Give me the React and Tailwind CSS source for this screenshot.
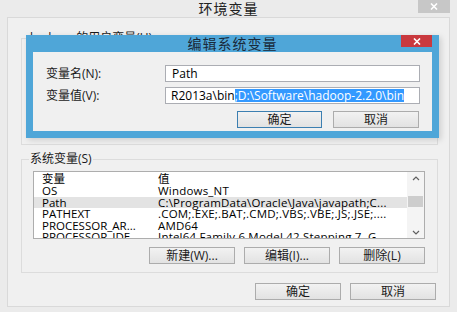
import React from 'react';

const font = "font-['Open_Sans','Noto_Sans_CJK_SC',sans-serif]";

const rows = [
  ['OS', 'Windows_NT'],
  ['Path', 'C:\\ProgramData\\Oracle\\Java\\javapath;C...'],
  ['PATHEXT', '.COM;.EXE;.BAT;.CMD;.VBS;.VBE;.JS;.JSE;....'],
  ['PROCESSOR_AR...', 'AMD64'],
  ['PROCESSOR_IDE...', 'Intel64 Family 6 Model 42 Stepping 7, G...'],
];

// Botón estilo Windows 8
function WinButton({ children, className = '', primary = false }) {
  return (
    <button
      type="button"
      className={`h-[17px] flex items-center justify-center text-[12px] leading-none text-[#1a1a1a] bg-gradient-to-b from-[#f2f2f2] to-[#e2e2e2] border ${
        primary ? 'border-[#3c7fb1]' : 'border-[#acacac]'
      } ${className}`}
    >
      {children}
    </button>
  );
}

function Chevron({ down }) {
  return (
    <svg width="8" height="5" viewBox="0 0 8 5" className="block">
      <polyline
        points={down ? '1,1 4,4 7,1' : '1,4 4,1 7,4'}
        fill="none"
        stroke="#606060"
        strokeWidth="1.2"
      />
    </svg>
  );
}

export default function App() {
  return (
    <div className={`relative w-[457px] h-[312px] overflow-hidden bg-[#ebebeb] flex flex-col ${font}`}>
      {/* Barra de título de la ventana principal */}
      <div className="h-[17px] grid grid-cols-[1fr_auto_1fr] items-start shrink-0">
        <div />
        <div className="text-[14px] leading-[17px] tracking-[1px] text-[#222]">环境变量</div>
        <div className="flex justify-end pr-[7px]">
          <div className="w-[32px] h-[13px] bg-[#c7c7c7] flex items-center justify-center">
            <svg width="8" height="7" viewBox="0 0 8 7">
              <path d="M1 0.5 L7 6.5 M7 0.5 L1 6.5" stroke="#fff" strokeWidth="1.6" />
            </svg>
          </div>
        </div>
      </div>

      {/* Área de cliente */}
      <div className="flex-1 mx-[7px] mb-[5px] border border-[#d9d9d9] bg-[#f0f0f0] flex flex-col pl-[13px] pr-[11px]">
        {/* Grupo de variables de usuario (tapado por el diálogo) */}
        <fieldset className="mt-[13px] h-[114px] border border-[#dcdcdc]">
          <legend className="ml-[7px] px-[1px] text-[12px] leading-[14px] text-[#1a1a1a]">hadoop 的用户变量(U)</legend>
        </fieldset>

        {/* Grupo de variables del sistema */}
        <fieldset className="mt-[7px] h-[121px] border border-[#dcdcdc]">
          <legend className="ml-[7px] px-[1px] text-[12px] leading-[14px] text-[#1a1a1a]">系统变量(S)</legend>
          <div className="pl-[11px] pr-[12px] pt-[5px] flex flex-col">
            <div className="h-[68px] border border-[#adadad] bg-white flex overflow-hidden">
              <div className="flex-1 flex flex-col text-[11.5px] text-black">
                <div className="h-[13px] shrink-0 flex items-center leading-[13px]">
                  <span className="w-[124px] pl-[8px] shrink-0">变量</span>
                  <span>值</span>
                </div>
                {rows.map(([name, value]) => (
                  <div
                    key={name}
                    className={`h-[11.6px] shrink-0 flex items-center leading-[11.6px] whitespace-nowrap ${
                      name === 'Path' ? 'bg-[#e3e3e3]' : ''
                    }`}
                  >
                    <span className="w-[124px] pl-[8px] shrink-0">{name}</span>
                    <span className="tracking-[0.2px]">{value}</span>
                  </div>
                ))}
              </div>
              {/* Barra de desplazamiento */}
              <div className="w-[17px] shrink-0 bg-[#f4f4f4] flex flex-col items-center">
                <div className="h-[12px] flex items-center justify-center"><Chevron /></div>
                <div className="h-[12px]" />
                <div className="h-[11px] w-[15px] bg-[#cdcdcd]" />
                <div className="flex-1" />
                <div className="h-[12px] flex items-center justify-center"><Chevron down /></div>
              </div>
            </div>
            <div className="mt-[8px] flex justify-end gap-[9px]">
              <WinButton className="w-[86px]">新建(W)...</WinButton>
              <WinButton className="w-[86px]">编辑(I)...</WinButton>
              <WinButton className="w-[86px]">删除(L)</WinButton>
            </div>
          </div>
        </fieldset>

        <div className="mt-[10px] flex justify-end gap-[9px] pr-[2px]">
          <WinButton className="w-[86px]">确定</WinButton>
          <WinButton className="w-[86px]">取消</WinButton>
        </div>
      </div>

      {/* Diálogo superpuesto: editar variable del sistema */}
      <div className="absolute left-[26px] top-[35px] w-[413px] h-[103px] bg-[#4fa6d8] flex flex-col shadow-[2px_2px_6px_rgba(0,0,0,0.15)]">
        <div className="h-[17px] grid grid-cols-[1fr_auto_1fr] items-start shrink-0">
          <div />
          <div className="text-[14px] leading-[17px] tracking-[1px] text-[#1a2a3a]">编辑系统变量</div>
          <div className="flex justify-end pr-[7px]">
            <div className="w-[31px] h-[12px] bg-[#c9393e] flex items-center justify-center">
              <svg width="8" height="7" viewBox="0 0 8 7">
                <path d="M1 0.5 L7 6.5 M7 0.5 L1 6.5" stroke="#fff" strokeWidth="1.6" />
              </svg>
            </div>
          </div>
        </div>
        <div className="flex-1 mx-[7px] mb-[7px] bg-[#f0f0f0] pl-[13px] pr-[12px] pt-[13px] flex flex-col text-[12px] text-[#1a1a1a]">
          <div className="flex items-center h-[17px]">
            <span className="w-[119px] shrink-0">变量名(N):</span>
            <div className="flex-1 h-[17px] border border-[#abadb3] bg-white pl-[6px] flex items-center leading-none text-black">
              Path
            </div>
          </div>
          <div className="mt-[5px] flex items-center h-[17px]">
            <span className="w-[119px] shrink-0">变量值(V):</span>
            <div className="flex-1 h-[17px] border border-[#abadb3] bg-white pl-[5px] flex items-center leading-none text-black whitespace-nowrap overflow-hidden">
              <span>R2013a\bin</span>
              <span className="bg-[#3399ff] text-white h-[13px] flex items-center">;D:\Software\hadoop-2.2.0\bin</span>
            </div>
          </div>
          <div className="mt-[7px] flex justify-end gap-[11px] pr-[1px]">
            <WinButton className="w-[85px]" primary>确定</WinButton>
            <WinButton className="w-[86px]">取消</WinButton>
          </div>
        </div>
      </div>
    </div>
  );
}
